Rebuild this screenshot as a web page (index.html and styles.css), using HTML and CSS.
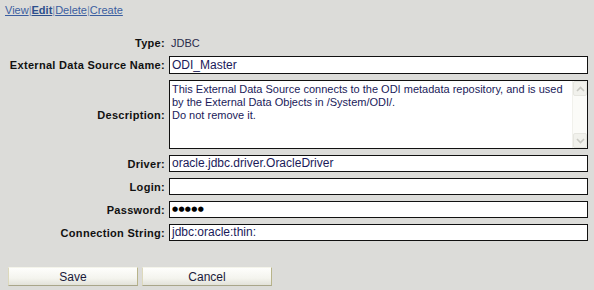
FILE: index.html
```html
<!DOCTYPE html>
<html>
<head>
<meta charset="utf-8">
<link rel="stylesheet" href="styles.css">
</head>
<body>
<div class="nav"><a href="#">View</a><span class="sep">|</span><a href="#" class="current">Edit</a><span class="sep">|</span><a href="#">Delete</a><span class="sep">|</span><a href="#">Create</a></div>
<div class="form">
  <div class="label type-label">Type:</div>
  <div class="value type-value">JDBC</div>

  <div class="label">External Data Source Name:</div>
  <div class="field name-field">ODI_Master</div>

  <div class="label">Description:</div>
  <div class="area">
    <div class="area-text">This External Data Source connects to the ODI metadata repository, and is used by the External Data Objects in /System/ODI/.<br>Do not remove it.</div>
    <div class="scroll">
      <div class="sbtn"><svg width="9" height="6" viewBox="0 0 9 6"><path d="M1 5 L4.5 1.5 L8 5" fill="none" stroke="#c8c8c2" stroke-width="1.6"/></svg></div>
      <div class="track"></div>
      <div class="sbtn"><svg width="9" height="6" viewBox="0 0 9 6"><path d="M1 1 L4.5 4.5 L8 1" fill="none" stroke="#c8c8c2" stroke-width="1.6"/></svg></div>
    </div>
  </div>

  <div class="label">Driver:</div>
  <div class="field">oracle.jdbc.driver.OracleDriver</div>

  <div class="label">Login:</div>
  <div class="field"></div>

  <div class="label">Password:</div>
  <div class="field dots">●●●●●</div>

  <div class="label">Connection String:</div>
  <div class="field">jdbc:oracle:thin:</div>
</div>
<div class="buttons">
  <button class="btn">Save</button>
  <button class="btn">Cancel</button>
</div>
</body>
</html>
```
FILE: styles.css
```css
html, body {
  margin: 0;
  padding: 0;
  background: #dcdcd9;
}
body {
  font-family: "Liberation Sans", Arial, sans-serif;
  font-size: 11px;
  color: #000;
  width: 594px;
  height: 290px;
  overflow: hidden;
}
.nav {
  padding: 3px 0 0 5px;
  height: 14px;
  line-height: 14px;
  font-size: 11px;
}
.nav a {
  color: #3b5ea0;
  text-decoration: underline;
}
.nav a.current {
  font-weight: bold;
  color: #2c4f8c;
}
.nav .sep {
  color: #7a8cb0;
}
.form {
  display: grid;
  grid-template-columns: 157px 419px;
  column-gap: 4px;
  row-gap: 6px;
  margin: 19px 0 0 8px;
  align-items: center;
}
.label {
  text-align: right;
  font-weight: bold;
  font-size: 11px;
  letter-spacing: 0.3px;
  white-space: nowrap;
  color: #111;
}
.type-label, .type-value {
  height: 14px;
  line-height: 14px;
}
.value {
  padding-left: 2px;
  font-size: 11px;
  color: #2a2a4a;
}
.field {
  box-sizing: border-box;
  height: 17px;
  border: 1px solid #111;
  background: #fff;
  padding: 0 2px;
  line-height: 15px;
  font-size: 12px;
  color: #1a1a5a;
  white-space: nowrap;
  overflow: hidden;
}
.name-field {
  height: 18px;
  line-height: 16px;
}
.dots {
  font-family: "DejaVu Sans", sans-serif;
  font-size: 7px;
  letter-spacing: 0.3px;
  color: #000;
  line-height: 15px;
}
.area {
  box-sizing: border-box;
  height: 69px;
  border: 1px solid #111;
  background: #fff;
  display: flex;
}
.area-text {
  flex: 1;
  padding: 2px 2px;
  font-size: 11px;
  line-height: 13px;
  color: #1a1a5a;
}
.scroll {
  width: 14px;
  display: flex;
  flex-direction: column;
  background: #fbfbf8;
  border-left: 1px solid #f1f1ec;
}
.sbtn {
  height: 15px;
  box-sizing: border-box;
  border: 1px solid #e6e6e0;
  border-radius: 2px;
  background: #f1f1ec;
  display: flex;
  align-items: center;
  justify-content: center;
}
.track {
  flex: 1;
}
.buttons {
  display: flex;
  gap: 4px;
  margin: 26px 0 0 8px;
}
.btn {
  box-sizing: border-box;
  width: 130px;
  height: 19px;
  padding: 0;
  font-family: "Liberation Sans", Arial, sans-serif;
  font-size: 12px;
  color: #1a1a3a;
  background: linear-gradient(#fefefc, #f4f4ee 60%, #e2e2da);
  border: 1px solid;
  border-color: #f4f4ea #b8b48a #a9a68a #ddd9bc;
  border-radius: 0;
}
```
